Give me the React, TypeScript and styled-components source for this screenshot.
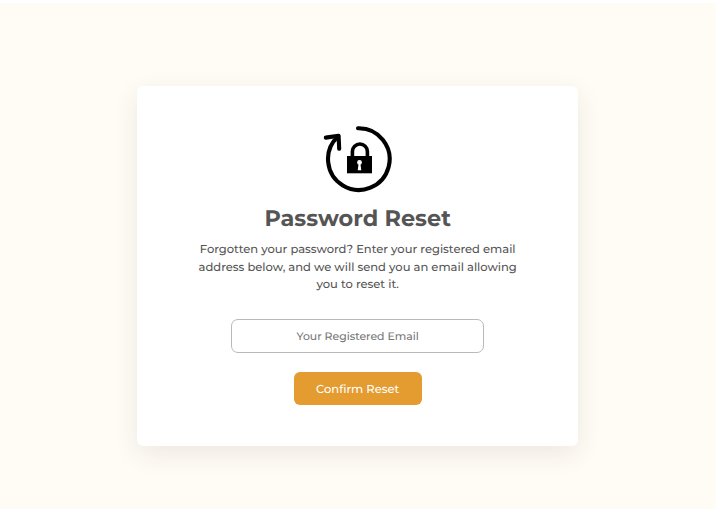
import React from "react";
import styled, { createGlobalStyle } from "styled-components";

const GlobalStyle = createGlobalStyle`
  * { box-sizing: border-box; }
  body { margin: 0; background: #fff; font-family: Montserrat, Inter, "Open Sans", sans-serif; }
`;

const Page = styled.main`
  height: 509px;
  border-top: 3px solid #fff;
  border-right: 1px solid #fff;
  padding-top: 83px;
  background: #fffcf5;
  overflow: hidden;
  text-rendering: geometricPrecision;
`;

const Card = styled.section`
  display: flex;
  flex-direction: column;
  align-items: center;
  width: 440.6px;
  height: 360px;
  margin-left: 137.4px;
  padding-top: 38px;
  border-radius: 6px;
  background: #fff;
  color: #555;
  box-shadow: 0 8px 26px rgba(50, 20, 40, 0.09);
`;

const LockIcon = styled.svg`
  display: block;
  width: 72px;
  height: 70px;
`;

const Title = styled.h1`
  margin: 10px 0 0;
  font-size: 22.4px;
  line-height: 28px;
  font-weight: 700;
`;

const Message = styled.p`
  width: 330px;
  margin: 9.3px 0 0;
  font-size: 11.52px;
  line-height: 17.28px;
  font-weight: 500;
  text-align: center;
`;

const EmailInput = styled.input`
  width: 253px;
  height: 34px;
  margin-top: 25.5px;
  padding: 1px 0 0;
  border: 1px solid #b9b9b9;
  border-radius: 7px;
  background: #fff;
  font: 500 10.88px Montserrat, Inter, sans-serif;
  text-align: center;
  text-rendering: inherit;
  outline: none;
  &::placeholder { color: #757575; opacity: 1; }
`;

const ResetButton = styled.button`
  width: 128px;
  height: 33.4px;
  margin-top: 19px;
  padding: 1px 0 0;
  border: 0;
  border-radius: 6px;
  background: #e49b2f;
  color: #fff;
  font: 500 11.52px Montserrat, Inter, sans-serif;
  text-rendering: inherit;
`;

export default function App() {
  return (
    <>
      <GlobalStyle />
      <Page>
        <Card>
          <LockIcon viewBox="322 124 72 70" fill="none" aria-hidden="true">
            <g stroke="#000" strokeWidth="4.1" strokeLinecap="round" strokeLinejoin="round">
              <path d="M358 128.3A30.8 30.8 0 1 1 338 136.4" />
              <path d="M325.8 137.6L338.6 135.8L339.2 148.8" />
            </g>
            <path d="M352.4 157V151.5a7.5 7.5 0 0 1 15 0V157" stroke="#000" strokeWidth="3.6" />
            <path d="M347 156h25v17.3h-25z" fill="#000" />
            <circle cx="359.5" cy="162.4" r="2.4" fill="#fff" />
            <path d="M358.7 163h1.6l1 7.3h-3.6z" fill="#fff" />
          </LockIcon>
          <Title>Password Reset</Title>
          <Message>
            Forgotten your password? Enter your registered email address below,
            and we will send you an email allowing you to reset it.
          </Message>
          <EmailInput type="email" placeholder="Your Registered Email" aria-label="Your Registered Email" />
          <ResetButton type="button">Confirm Reset</ResetButton>
        </Card>
      </Page>
    </>
  );
}
